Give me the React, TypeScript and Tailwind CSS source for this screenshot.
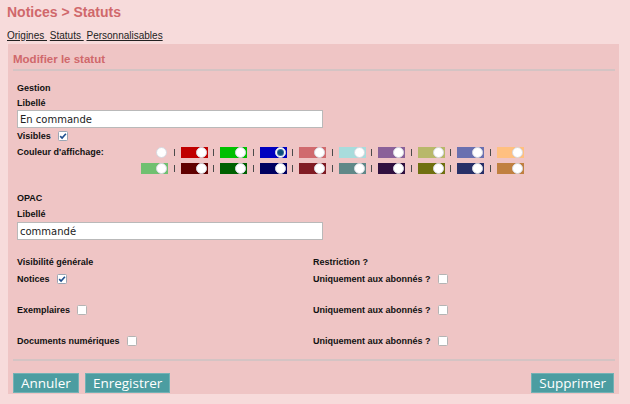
import type { ReactNode } from 'react';

const row1 = ['', '#c00000', '#00c000', '#0000c0', '#d06a6e', '#a8dcdc', '#8a6199', '#b8b86a', '#6a70b0', '#ffc080'];
const row2 = ['#70c070', '#600000', '#006000', '#000060', '#801c24', '#608888', '#301040', '#707010', '#283068', '#c08040'];

function Checkbox({ checked = false }: { checked?: boolean }) {
  return (
    <svg width="10" height="10" viewBox="0 0 10 10" className="ml-[7px] shrink-0">
      <rect x="0.5" y="0.5" width="9" height="9" rx="1" fill="#fff" stroke={checked ? '#9aa6b4' : '#b4b4b4'} />
      {checked && <path d="M2.2 5.1 L4.1 7.1 L7.9 2.7" fill="none" stroke="#1f4f8f" strokeWidth="1.6" />}
    </svg>
  );
}

function Label({ children, className = '' }: { children: ReactNode; className?: string }) {
  return <div className={`flex h-[12px] items-center text-[9px] leading-[12px] font-bold text-[#111] ${className}`}>{children}</div>;
}

function Swatch({ color, selected }: { color: string; selected?: boolean }) {
  return (
    <span
      className="flex h-[11px] w-[27px] items-center justify-end pr-[1px]"
      style={{ backgroundColor: color || 'transparent' }}
    >
      <span className="flex size-[11px] items-center justify-center rounded-full border border-[#d6d8e0] bg-white">
        {selected && <span className="size-[5px] rounded-full bg-[#0d4f7c] ring-1 ring-[#3a6f9a]" />}
      </span>
    </span>
  );
}

function SwatchRow({ colors, selectedIndex }: { colors: string[]; selectedIndex?: number }) {
  return (
    <div className="flex h-[11px] items-center">
      {colors.map((c, i) => (
        <div key={i} className="flex items-center">
          {i > 0 && (
            <span className="flex w-[12.5px] justify-center">
              <span className="h-[7px] w-px bg-[#4a4a4a]" />
            </span>
          )}
          <Swatch color={c} selected={i === selectedIndex} />
        </div>
      ))}
    </div>
  );
}

function TextInput({ value }: { value: string }) {
  return (
    <div className="flex h-[18px] w-[306px] items-center border border-[#b9b9b9] bg-white pl-[2px] font-['DejaVu_Sans',sans-serif] text-[10px] text-[#222]">
      {value}
    </div>
  );
}

function Button({ children }: { children: ReactNode }) {
  return (
    <button
      type="button"
      className="h-[20px] border border-[#72b2b5] bg-[#4c9da1] px-[7px] font-['Open_Sans',sans-serif] text-[13.5px] leading-[18px] text-white"
    >
      {children}
    </button>
  );
}

export default function App() {
  return (
    <div className="h-[404px] w-[630px] bg-[#f7dbdb] font-['Liberation_Sans',Arial,sans-serif]">
      <div className="px-[7px] pt-[4px]">
        <h1 className="text-[14px] leading-[16px] font-bold text-[#d0686b]">Notices &gt; Statuts</h1>
        <div className="mt-[10px] h-[12px] text-[10px] leading-[12px] text-[#222]">
          <a className="underline">Origines&nbsp;</a> <a className="underline">Statuts&nbsp;</a>{' '}
          <a className="underline">Personnalisables</a>
        </div>
      </div>

      <div className="mt-[2px] ml-[8px] h-[350px] w-[611px] bg-[#efc5c5] pt-[8px] pr-[4px] pl-[5px]">
        <h2 className="h-[14px] text-[11.5px] leading-[14px] font-bold text-[#d0686b]">Modifier le statut</h2>
        <div className="mt-[3px] h-[2px] bg-[#d4c4c4]" />

        <div className="pl-[4px]">
          <Label className="mt-[11px]">Gestion</Label>
          <Label className="mt-[3px]">Libellé</Label>
          <div className="mt-[1px]">
            <TextInput value="En commande" />
          </div>
          <Label className="mt-[2px]">
            Visibles
            <Checkbox checked />
          </Label>

          <div className="mt-[5px] flex">
            <div className="flex h-[11px] w-[124px] items-center text-[9px] font-bold text-[#111]">Couleur d'affichage:</div>
            <div className="flex flex-col gap-[5px]">
              <SwatchRow colors={row1} selectedIndex={3} />
              <SwatchRow colors={row2} />
            </div>
          </div>

          <Label className="mt-[18px]">OPAC</Label>
          <Label className="mt-[4px]">Libellé</Label>
          <div className="mt-[2px]">
            <TextInput value="commandé" />
          </div>

          <div className="mt-[16px] grid grid-cols-[296px_1fr]">
            <Label>Visibilité générale</Label>
            <Label>Restriction ?</Label>

            <Label className="mt-[5px]">
              Notices
              <Checkbox checked />
            </Label>
            <Label className="mt-[5px]">
              Uniquement aux abonnés ?
              <Checkbox />
            </Label>

            <Label className="mt-[19px]">
              Exemplaires
              <Checkbox />
            </Label>
            <Label className="mt-[19px]">
              Uniquement aux abonnés ?
              <Checkbox />
            </Label>

            <Label className="mt-[19px]">
              Documents numériques
              <Checkbox />
            </Label>
            <Label className="mt-[19px]">
              Uniquement aux abonnés ?
              <Checkbox />
            </Label>
          </div>
        </div>

        <div className="mt-[12px] h-[2px] bg-[#d4c4c4]" />

        <div className="mt-[10px] flex items-center pr-[1px]">
          <Button>Annuler</Button>
          <div className="ml-[6px]">
            <Button>Enregistrer</Button>
          </div>
          <div className="ml-auto">
            <Button>Supprimer</Button>
          </div>
        </div>
      </div>
    </div>
  );
}
